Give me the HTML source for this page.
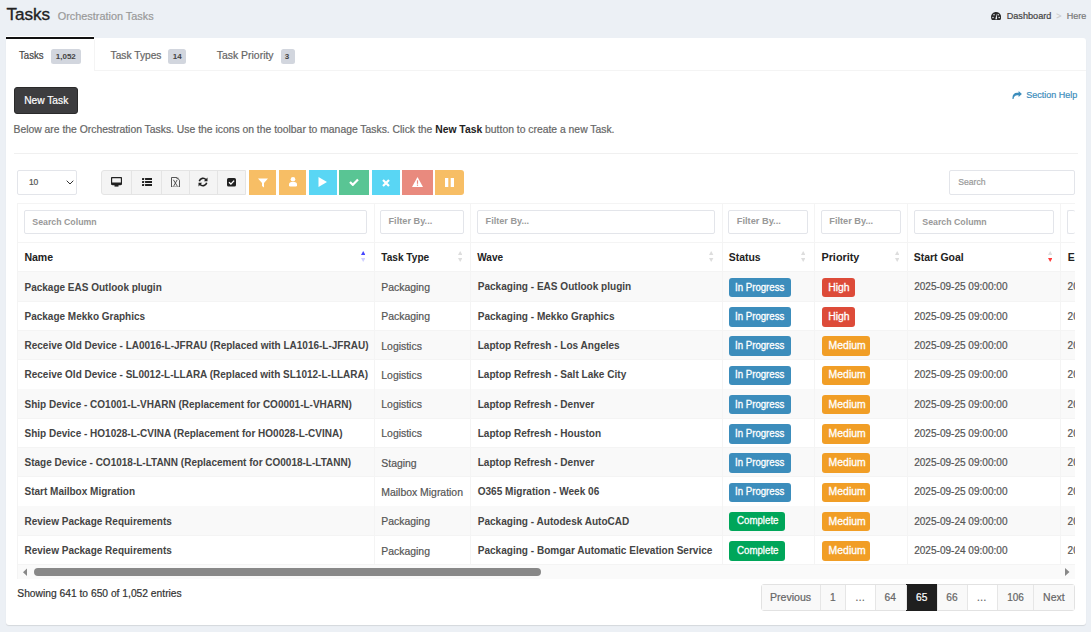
<!DOCTYPE html><html><head><meta charset="utf-8"><style>
*{box-sizing:border-box;margin:0;padding:0}
html,body{width:1091px;height:632px;overflow:hidden}
body{background:#ecf0f5;font-family:"Liberation Sans",sans-serif;position:relative}
.t{position:absolute;white-space:nowrap;-webkit-text-stroke:0.2px}
.t[style*="font-weight:700"],.t b{-webkit-text-stroke:0}
.r{position:absolute}
</style></head><body>
<div class="t" style="left:6.40px;top:4.12px;font-size:17.131px;line-height:21.41px;color:#222;font-weight:400;-webkit-text-stroke:0.35px">Tasks</div>
<div class="t" style="left:57.73px;top:10.14px;font-size:10.887px;line-height:13.61px;color:#999;font-weight:400;">Orchestration Tasks</div>
<svg class="r" style="left:990.70px;top:11.90px" width="10.2" height="8" viewBox="0 0 10.2 8"><path d="M0.9 8 C0.3 7.1 0 6.1 0 5.1 C0 2.3 2.3 0 5.1 0 C7.9 0 10.2 2.3 10.2 5.1 C10.2 6.1 9.9 7.1 9.3 8 Z" fill="#2a2a2a"/><circle cx="2.0" cy="5.4" r="0.75" fill="#ecf0f5"/><circle cx="3.0" cy="2.7" r="0.75" fill="#ecf0f5"/><circle cx="7.2" cy="2.7" r="0.75" fill="#ecf0f5"/><circle cx="8.2" cy="5.4" r="0.75" fill="#ecf0f5"/><path d="M4.3 7.2 L5.8 1.8 L6.1 7.2 Z" fill="#ecf0f5"/></svg>
<div class="t" style="left:1006.70px;top:10.62px;font-size:9.138px;line-height:11.42px;color:#444;font-weight:400;">Dashboard</div>
<div class="t" style="left:1056.30px;top:10.75px;font-size:8.8px;line-height:11.0px;color:#ccc;font-weight:400;">&gt;</div>
<div class="t" style="left:1066.70px;top:10.65px;font-size:9.053px;line-height:11.32px;color:#777;font-weight:400;">Here</div>
<div class="r" style="left:6.00px;top:37.60px;width:1080.00px;height:587.90px;background:#fff;border-radius:3px;box-shadow:0 1px 1px rgba(0,0,0,.1)"></div>
<div class="r" style="left:6.00px;top:35.90px;width:88.10px;height:2.10px;background:#fff"></div>
<div class="r" style="left:6.00px;top:70.00px;width:1080.00px;height:1.00px;background:#f4f4f4"></div>
<div class="r" style="left:6.00px;top:37.00px;width:88.10px;height:2.40px;background:#111"></div>
<div class="r" style="left:93.60px;top:39.65px;width:1.00px;height:30.35px;background:#f4f4f4"></div>
<div class="r" style="left:6.00px;top:70.00px;width:87.50px;height:1.00px;background:#fff"></div>
<div class="t" style="left:19.00px;top:50.38px;font-size:10px;line-height:12.5px;color:#444;font-weight:400;transform:scaleX(0.9615);transform-origin:0 0;">Tasks</div>
<div class="t" style="left:110.60px;top:50.08px;font-size:10.212px;line-height:12.77px;color:#666;font-weight:400;">Task Types</div>
<div class="t" style="left:216.76px;top:49.14px;font-size:10.456px;line-height:13.07px;color:#666;font-weight:400;">Task Priority</div>
<div class="r" style="left:51.30px;top:49.10px;width:29.50px;height:15.30px;background:#d2d6de;border-radius:2.5px"></div>
<div class="t" style="left:55.81px;top:52.11px;font-size:8.0px;line-height:10.0px;color:#444;font-weight:700;">1,052</div>
<div class="r" style="left:168.20px;top:49.10px;width:18.00px;height:15.30px;background:#d2d6de;border-radius:2.5px"></div>
<div class="t" style="left:172.81px;top:52.11px;font-size:8.0px;line-height:10.0px;color:#444;font-weight:700;">14</div>
<div class="r" style="left:280.60px;top:49.10px;width:14.10px;height:15.30px;background:#d2d6de;border-radius:2.5px"></div>
<div class="t" style="left:284.81px;top:52.11px;font-size:8.0px;line-height:10.0px;color:#444;font-weight:700;">3</div>
<div class="r" style="left:14.00px;top:87.00px;width:64.00px;height:26.50px;background:#3d3d3f;border:1px solid #2a2a2a;border-radius:3px"></div>
<div class="t" style="left:24.20px;top:94.87px;font-size:10.216px;line-height:12.77px;color:#fff;font-weight:400;">New Task</div>
<div class="t" style="left:13.50px;top:123.92px;font-size:10.378px;line-height:12.97px;color:#666;font-weight:400;">Below are the Orchestration Tasks. Use the icons on the toolbar to manage Tasks. Click the <b style="color:#222">New Task</b> button to create a new Task.</div>
<svg class="r" style="left:1011.50px;top:90.60px" width="10" height="8.2" viewBox="0 0 10 8.2"><path d="M6.6 0 L9.9 3.05 L6.6 6.1 V4.3 H5.2 C3.2 4.3 1.9 5.6 1.5 8.2 H0.5 C0.1 4.2 1.8 1.8 5.2 1.8 H6.6 Z" fill="#3c8dbc"/></svg>
<div class="t" style="left:1026.21px;top:90.14px;font-size:9.012px;line-height:11.27px;color:#3c8dbc;font-weight:400;">Section Help</div>
<div class="r" style="left:14.00px;top:153.20px;width:1064.30px;height:1.00px;background:#f0f0f0"></div>
<div class="r" style="left:17.00px;top:170.00px;width:60.00px;height:24.50px;background:#fff;border:1px solid #e3e5ea;border-radius:2px"></div>
<div class="t" style="left:28.90px;top:177.30px;font-size:8.5px;line-height:10.62px;color:#555;font-weight:400;">10</div>
<svg class="r" style="left:65.50px;top:180.00px" width="8" height="5" viewBox="0 0 8 5"><path d="M0.7 0.7 L4 4 L7.3 0.7" fill="none" stroke="#333" stroke-width="1.0"/></svg>
<div class="r" style="left:101.20px;top:170.00px;width:144.60px;height:24.60px;background:#f4f4f4;border:1px solid #e4e4e4;border-radius:3px 0 0 3px"></div>
<div class="r" style="left:131.20px;top:170.00px;width:1.00px;height:24.60px;background:#e4e4e4"></div>
<div class="r" style="left:160.90px;top:170.00px;width:1.00px;height:24.60px;background:#e4e4e4"></div>
<div class="r" style="left:188.80px;top:170.00px;width:1.00px;height:24.60px;background:#e4e4e4"></div>
<div class="r" style="left:216.60px;top:170.00px;width:1.00px;height:24.60px;background:#e4e4e4"></div>
<svg class="r" style="left:111.00px;top:177.00px" width="11" height="10" viewBox="0 0 11 10"><rect x="0.5" y="0.5" width="10" height="7" rx="1" fill="none" stroke="#222" stroke-width="1.3"/><rect x="0.5" y="5.5" width="10" height="2.2" fill="#222"/><rect x="3.5" y="8" width="4" height="1.6" fill="#222"/></svg>
<svg class="r" style="left:141.60px;top:177.80px" width="10.3" height="8" viewBox="0 0 10.3 8"><g fill="#222"><rect x="0" y="0" width="2.1" height="1.9" rx="0.5"/><rect x="3" y="0" width="7.3" height="1.9" rx="0.4"/><rect x="0" y="3.05" width="2.1" height="1.9" rx="0.5"/><rect x="3" y="3.05" width="7.3" height="1.9" rx="0.4"/><rect x="0" y="6.1" width="2.1" height="1.9" rx="0.5"/><rect x="3" y="6.1" width="7.3" height="1.9" rx="0.4"/></g></svg>
<svg class="r" style="left:171.00px;top:176.80px" width="9" height="10.6" viewBox="0 0 9 10.6"><path d="M0.5 0.5 H5.8 L8.5 3.2 V10.1 H0.5 Z" fill="none" stroke="#444" stroke-width="0.9"/><path d="M2.4 2.8 L6.4 9.3 M6.2 2.8 L2.6 9.3" stroke="#444" stroke-width="0.9"/><path d="M5.2 1.2 L7.6 1.2" stroke="#444" stroke-width="0.7"/></svg>
<svg class="r" style="left:198.00px;top:176.80px" width="10" height="10" viewBox="0 0 10 10"><path d="M1.3 4.2 A3.8 3.8 0 0 1 8 2.8" fill="none" stroke="#222" stroke-width="1.6"/><path d="M9.5 0.6 V4.3 H5.8 Z" fill="#222"/><path d="M8.7 5.8 A3.8 3.8 0 0 1 2 7.2" fill="none" stroke="#222" stroke-width="1.6"/><path d="M0.5 9.4 V5.7 H4.2 Z" fill="#222"/></svg>
<svg class="r" style="left:227.00px;top:178.00px" width="9" height="8.5" viewBox="0 0 9 8.5"><rect x="0" y="0" width="9" height="8.5" rx="1.6" fill="#222"/><path d="M2 4.3 L3.9 6.1 L7.1 2.6" fill="none" stroke="#fff" stroke-width="1.4"/></svg>
<div class="r" style="left:248.50px;top:170.00px;width:27.90px;height:24.60px;background:#f7be65;border-radius:0"></div>
<div class="r" style="left:279.00px;top:170.00px;width:27.30px;height:24.60px;background:#f7be65;border-radius:0"></div>
<div class="r" style="left:308.90px;top:170.00px;width:27.90px;height:24.60px;background:#59d6f4;border-radius:0"></div>
<div class="r" style="left:339.40px;top:170.00px;width:29.80px;height:24.60px;background:#59c594;border-radius:0"></div>
<div class="r" style="left:371.90px;top:170.00px;width:27.90px;height:24.60px;background:#59d6f4;border-radius:0"></div>
<div class="r" style="left:402.40px;top:170.00px;width:30.40px;height:24.60px;background:#e98a7e;border-radius:0"></div>
<div class="r" style="left:435.10px;top:170.00px;width:28.60px;height:24.60px;background:#f7be65;border-radius:0 3px 3px 0"></div>
<svg class="r" style="left:257.50px;top:177.50px" width="10" height="10" viewBox="0 0 10 10"><path d="M0 0.5 H10 L6 5 V9.5 L4 8 V5 Z" fill="#fff"/></svg>
<svg class="r" style="left:288.70px;top:177.45px" width="8" height="9.5" viewBox="0 0 8 9.5"><circle cx="4" cy="2.3" r="2.3" fill="#fff"/><path d="M0 8.3 V7.3 C0 5.6 1.4 5 4 5 C6.6 5 8 5.6 8 7.3 V8.3 Q8 9.5 6.8 9.5 H1.2 Q0 9.5 0 8.3 Z" fill="#fff"/></svg>
<svg class="r" style="left:318.40px;top:177.30px" width="9" height="10" viewBox="0 0 9 10"><path d="M0.5 0 L9 5 L0.5 10 Z" fill="#fff"/></svg>
<svg class="r" style="left:349.30px;top:178.30px" width="10" height="8" viewBox="0 0 10 8"><path d="M1 4 L3.8 6.8 L9 1.5" fill="none" stroke="#fff" stroke-width="2.2"/></svg>
<svg class="r" style="left:381.80px;top:178.60px" width="8" height="8" viewBox="0 0 8 8"><path d="M1 1 L7 7 M7 1 L1 7" stroke="#fff" stroke-width="2.2"/></svg>
<svg class="r" style="left:412.10px;top:177.30px" width="11" height="10" viewBox="0 0 11 10"><path d="M5.5 0 L11 10 H0 Z" fill="#fff"/><rect x="4.9" y="3.3" width="1.2" height="3.5" fill="#e98a7e"/><rect x="4.9" y="7.6" width="1.2" height="1.2" fill="#e98a7e"/></svg>
<svg class="r" style="left:444.90px;top:178.10px" width="9" height="9" viewBox="0 0 9 9"><rect x="0" y="0" width="3.3" height="9" fill="#fff"/><rect x="5.7" y="0" width="3.3" height="9" fill="#fff"/></svg>
<div class="r" style="left:949.40px;top:170.00px;width:125.20px;height:24.60px;background:#fff;border:1px solid #e3e5ea;border-radius:2px"></div>
<div class="t" style="left:958.30px;top:177.19px;font-size:8.614px;line-height:10.77px;color:#999;font-weight:400;">Search</div>
<div class="r" style="left:17.50px;top:203.00px;width:1057.50px;height:1.00px;background:#f4f4f4"></div>
<div class="r" style="left:17.50px;top:241.50px;width:1057.50px;height:1.00px;background:#f4f4f4"></div>
<div class="r" style="left:17.50px;top:271.20px;width:1057.50px;height:1.40px;background:#f4f4f4"></div>
<div class="r" style="left:17.50px;top:272.00px;width:1057.50px;height:29.27px;background:#f9f9f9"></div>
<div class="r" style="left:17.50px;top:300.77px;width:1057.50px;height:1.00px;background:#f4f4f4"></div>
<div class="r" style="left:17.50px;top:330.04px;width:1057.50px;height:1.00px;background:#f4f4f4"></div>
<div class="r" style="left:17.50px;top:330.54px;width:1057.50px;height:29.27px;background:#f9f9f9"></div>
<div class="r" style="left:17.50px;top:359.31px;width:1057.50px;height:1.00px;background:#f4f4f4"></div>
<div class="r" style="left:17.50px;top:388.58px;width:1057.50px;height:1.00px;background:#f4f4f4"></div>
<div class="r" style="left:17.50px;top:389.08px;width:1057.50px;height:29.27px;background:#f9f9f9"></div>
<div class="r" style="left:17.50px;top:417.85px;width:1057.50px;height:1.00px;background:#f4f4f4"></div>
<div class="r" style="left:17.50px;top:447.12px;width:1057.50px;height:1.00px;background:#f4f4f4"></div>
<div class="r" style="left:17.50px;top:447.62px;width:1057.50px;height:29.27px;background:#f9f9f9"></div>
<div class="r" style="left:17.50px;top:476.39px;width:1057.50px;height:1.00px;background:#f4f4f4"></div>
<div class="r" style="left:17.50px;top:505.66px;width:1057.50px;height:1.00px;background:#f4f4f4"></div>
<div class="r" style="left:17.50px;top:506.16px;width:1057.50px;height:29.27px;background:#f9f9f9"></div>
<div class="r" style="left:17.50px;top:534.93px;width:1057.50px;height:1.00px;background:#f4f4f4"></div>
<div class="r" style="left:17.50px;top:564.20px;width:1057.50px;height:1.00px;background:#f4f4f4"></div>
<div class="r" style="left:17.00px;top:203.00px;width:1.00px;height:376.00px;background:#f4f4f4"></div>
<div class="r" style="left:373.50px;top:203.00px;width:1.00px;height:361.70px;background:#f4f4f4"></div>
<div class="r" style="left:470.00px;top:203.00px;width:1.00px;height:361.70px;background:#f4f4f4"></div>
<div class="r" style="left:721.50px;top:203.00px;width:1.00px;height:361.70px;background:#f4f4f4"></div>
<div class="r" style="left:814.00px;top:203.00px;width:1.00px;height:361.70px;background:#f4f4f4"></div>
<div class="r" style="left:907.20px;top:203.00px;width:1.00px;height:361.70px;background:#f4f4f4"></div>
<div class="r" style="left:1060.40px;top:203.00px;width:1.00px;height:361.70px;background:#f4f4f4"></div>
<div class="r" style="left:24.20px;top:210.20px;width:343.30px;height:23.60px;background:#fff;border:1px solid #e3e5ea;border-radius:2px;"></div>
<div class="t" style="left:32.30px;top:216.86px;font-size:8.79px;line-height:10.99px;color:#999;font-weight:700;">Search Column</div>
<div class="r" style="left:380.30px;top:210.20px;width:83.60px;height:23.60px;background:#fff;border:1px solid #e3e5ea;border-radius:2px;"></div>
<div class="t" style="left:388.50px;top:216.03px;font-size:9.201px;line-height:11.5px;color:#999;font-weight:700;">Filter By...</div>
<div class="r" style="left:477.10px;top:210.20px;width:238.40px;height:23.60px;background:#fff;border:1px solid #e3e5ea;border-radius:2px;"></div>
<div class="t" style="left:485.60px;top:215.83px;font-size:9.131px;line-height:11.41px;color:#999;font-weight:700;">Filter By...</div>
<div class="r" style="left:728.40px;top:210.20px;width:79.50px;height:23.60px;background:#fff;border:1px solid #e3e5ea;border-radius:2px;"></div>
<div class="t" style="left:736.80px;top:216.48px;font-size:9.258px;line-height:11.57px;color:#999;font-weight:700;">Filter By...</div>
<div class="r" style="left:821.00px;top:210.20px;width:79.80px;height:23.60px;background:#fff;border:1px solid #e3e5ea;border-radius:2px;"></div>
<div class="t" style="left:829.27px;top:216.01px;font-size:9.221px;line-height:11.53px;color:#999;font-weight:700;">Filter By...</div>
<div class="r" style="left:914.20px;top:210.20px;width:139.60px;height:23.60px;background:#fff;border:1px solid #e3e5ea;border-radius:2px;"></div>
<div class="t" style="left:922.30px;top:216.86px;font-size:8.79px;line-height:10.99px;color:#999;font-weight:700;">Search Column</div>
<div class="r" style="left:1067.00px;top:210.20px;width:8.00px;height:23.60px;background:#fff;border:1px solid #e3e5ea;border-radius:2px;border-right:none"></div>
<div class="t" style="left:24.40px;top:250.94px;font-size:10.557px;line-height:13.2px;color:#222;font-weight:700;">Name</div>
<div class="t" style="left:381.24px;top:251.68px;font-size:10.112px;line-height:12.64px;color:#222;font-weight:700;">Task Type</div>
<div class="t" style="left:477.24px;top:251.74px;font-size:10.044px;line-height:12.55px;color:#222;font-weight:700;">Wave</div>
<div class="t" style="left:728.76px;top:251.35px;font-size:10.452px;line-height:13.06px;color:#222;font-weight:700;">Status</div>
<div class="t" style="left:821.40px;top:250.95px;font-size:10.863px;line-height:13.58px;color:#222;font-weight:700;">Priority</div>
<div class="t" style="left:913.70px;top:251.31px;font-size:10.485px;line-height:13.11px;color:#222;font-weight:700;">Start Goal</div>
<svg class="r" style="left:360.90px;top:250.80px" width="4.4" height="11" viewBox="0 0 4.4 11"><path d="M2.2 0 L4.4 4 H0 Z" fill="#4646ff"/><path d="M0 7 H4.4 L2.2 11 Z" fill="#d0d0ff"/></svg>
<svg class="r" style="left:458.00px;top:250.80px" width="4.4" height="11" viewBox="0 0 4.4 11"><path d="M2.2 0 L4.4 4 H0 Z" fill="#ddd"/><path d="M0 7 H4.4 L2.2 11 Z" fill="#ddd"/></svg>
<svg class="r" style="left:709.30px;top:250.80px" width="4.4" height="11" viewBox="0 0 4.4 11"><path d="M2.2 0 L4.4 4 H0 Z" fill="#ddd"/><path d="M0 7 H4.4 L2.2 11 Z" fill="#ddd"/></svg>
<svg class="r" style="left:801.10px;top:250.80px" width="4.4" height="11" viewBox="0 0 4.4 11"><path d="M2.2 0 L4.4 4 H0 Z" fill="#ddd"/><path d="M0 7 H4.4 L2.2 11 Z" fill="#ddd"/></svg>
<svg class="r" style="left:894.60px;top:250.80px" width="4.4" height="11" viewBox="0 0 4.4 11"><path d="M2.2 0 L4.4 4 H0 Z" fill="#ddd"/><path d="M0 7 H4.4 L2.2 11 Z" fill="#ddd"/></svg>
<svg class="r" style="left:1047.50px;top:250.80px" width="4.4" height="11" viewBox="0 0 4.4 11"><path d="M2.2 0 L4.4 4 H0 Z" fill="#ddd"/><path d="M0 7 H4.4 L2.2 11 Z" fill="#ff3b3b"/></svg>
<div class="t" style="left:24.50px;top:281.55px;font-size:10.0px;line-height:12.5px;color:#444;font-weight:700;">Package EAS Outlook plugin</div>
<div class="t" style="left:381.30px;top:281.13px;font-size:10.432px;line-height:13.04px;color:#555;font-weight:400;">Packaging</div>
<div class="t" style="left:477.73px;top:281.48px;font-size:10.068px;line-height:12.58px;color:#444;font-weight:700;">Packaging - EAS Outlook plugin</div>
<div class="r" style="left:729.00px;top:277.70px;width:62.00px;height:19.60px;background:#3c8dbc;border-radius:3px"></div>
<div class="t" style="left:735.21px;top:281.55px;font-size:10px;line-height:12.5px;color:#fff;font-weight:400;transform:scaleX(0.9651);transform-origin:0 0;-webkit-text-stroke:0.3px">In Progress</div>
<div class="r" style="left:821.90px;top:277.70px;width:33.20px;height:19.60px;background:#dd4b39;border-radius:3px"></div>
<div class="t" style="left:828.20px;top:281.12px;font-size:10.446px;line-height:13.06px;color:#fff;font-weight:400;-webkit-text-stroke:0.3px">High</div>
<div class="t" style="left:914.20px;top:281.48px;font-size:10.067px;line-height:12.58px;color:#555;font-weight:400;">2025-09-25 09:00:00</div>
<div class="t" style="left:24.50px;top:310.81px;font-size:10.0px;line-height:12.5px;color:#444;font-weight:700;">Package Mekko Graphics</div>
<div class="t" style="left:381.30px;top:310.40px;font-size:10.432px;line-height:13.04px;color:#555;font-weight:400;">Packaging</div>
<div class="t" style="left:477.73px;top:310.75px;font-size:10.068px;line-height:12.58px;color:#444;font-weight:700;">Packaging - Mekko Graphics</div>
<div class="r" style="left:729.00px;top:306.97px;width:62.00px;height:19.60px;background:#3c8dbc;border-radius:3px"></div>
<div class="t" style="left:735.21px;top:310.81px;font-size:10px;line-height:12.5px;color:#fff;font-weight:400;transform:scaleX(0.9651);transform-origin:0 0;-webkit-text-stroke:0.3px">In Progress</div>
<div class="r" style="left:821.90px;top:306.97px;width:33.20px;height:19.60px;background:#dd4b39;border-radius:3px"></div>
<div class="t" style="left:828.20px;top:310.39px;font-size:10.446px;line-height:13.06px;color:#fff;font-weight:400;-webkit-text-stroke:0.3px">High</div>
<div class="t" style="left:914.20px;top:310.75px;font-size:10.067px;line-height:12.58px;color:#555;font-weight:400;">2025-09-25 09:00:00</div>
<div class="t" style="left:24.50px;top:340.09px;font-size:10.0px;line-height:12.5px;color:#444;font-weight:700;">Receive Old Device - LA0016-L-JFRAU (Replaced with LA1016-L-JFRAU)</div>
<div class="t" style="left:381.30px;top:339.67px;font-size:10.432px;line-height:13.04px;color:#555;font-weight:400;">Logistics</div>
<div class="t" style="left:477.73px;top:340.02px;font-size:10.068px;line-height:12.58px;color:#444;font-weight:700;">Laptop Refresh - Los Angeles</div>
<div class="r" style="left:729.00px;top:336.24px;width:62.00px;height:19.60px;background:#3c8dbc;border-radius:3px"></div>
<div class="t" style="left:735.21px;top:340.09px;font-size:10px;line-height:12.5px;color:#fff;font-weight:400;transform:scaleX(0.9651);transform-origin:0 0;-webkit-text-stroke:0.3px">In Progress</div>
<div class="r" style="left:821.90px;top:336.24px;width:48.40px;height:19.60px;background:#f19e26;border-radius:3px"></div>
<div class="t" style="left:828.60px;top:338.99px;font-size:10.445px;line-height:13.06px;color:#fff;font-weight:400;-webkit-text-stroke:0.3px">Medium</div>
<div class="t" style="left:914.20px;top:340.02px;font-size:10.067px;line-height:12.58px;color:#555;font-weight:400;">2025-09-25 09:00:00</div>
<div class="t" style="left:24.50px;top:369.36px;font-size:10.0px;line-height:12.5px;color:#444;font-weight:700;">Receive Old Device - SL0012-L-LLARA (Replaced with SL1012-L-LLARA)</div>
<div class="t" style="left:381.30px;top:368.94px;font-size:10.432px;line-height:13.04px;color:#555;font-weight:400;">Logistics</div>
<div class="t" style="left:477.73px;top:369.29px;font-size:10.068px;line-height:12.58px;color:#444;font-weight:700;">Laptop Refresh - Salt Lake City</div>
<div class="r" style="left:729.00px;top:365.51px;width:62.00px;height:19.60px;background:#3c8dbc;border-radius:3px"></div>
<div class="t" style="left:735.21px;top:369.36px;font-size:10px;line-height:12.5px;color:#fff;font-weight:400;transform:scaleX(0.9651);transform-origin:0 0;-webkit-text-stroke:0.3px">In Progress</div>
<div class="r" style="left:821.90px;top:365.51px;width:48.40px;height:19.60px;background:#f19e26;border-radius:3px"></div>
<div class="t" style="left:828.60px;top:368.26px;font-size:10.445px;line-height:13.06px;color:#fff;font-weight:400;-webkit-text-stroke:0.3px">Medium</div>
<div class="t" style="left:914.20px;top:369.29px;font-size:10.067px;line-height:12.58px;color:#555;font-weight:400;">2025-09-25 09:00:00</div>
<div class="t" style="left:24.50px;top:398.62px;font-size:10.0px;line-height:12.5px;color:#444;font-weight:700;">Ship Device - CO1001-L-VHARN (Replacement for CO0001-L-VHARN)</div>
<div class="t" style="left:381.30px;top:398.21px;font-size:10.432px;line-height:13.04px;color:#555;font-weight:400;">Logistics</div>
<div class="t" style="left:477.73px;top:398.56px;font-size:10.068px;line-height:12.58px;color:#444;font-weight:700;">Laptop Refresh - Denver</div>
<div class="r" style="left:729.00px;top:394.78px;width:62.00px;height:19.60px;background:#3c8dbc;border-radius:3px"></div>
<div class="t" style="left:735.21px;top:398.62px;font-size:10px;line-height:12.5px;color:#fff;font-weight:400;transform:scaleX(0.9651);transform-origin:0 0;-webkit-text-stroke:0.3px">In Progress</div>
<div class="r" style="left:821.90px;top:394.78px;width:48.40px;height:19.60px;background:#f19e26;border-radius:3px"></div>
<div class="t" style="left:828.60px;top:397.53px;font-size:10.445px;line-height:13.06px;color:#fff;font-weight:400;-webkit-text-stroke:0.3px">Medium</div>
<div class="t" style="left:914.20px;top:398.56px;font-size:10.067px;line-height:12.58px;color:#555;font-weight:400;">2025-09-25 09:00:00</div>
<div class="t" style="left:24.50px;top:427.89px;font-size:10.0px;line-height:12.5px;color:#444;font-weight:700;">Ship Device - HO1028-L-CVINA (Replacement for HO0028-L-CVINA)</div>
<div class="t" style="left:381.30px;top:427.48px;font-size:10.432px;line-height:13.04px;color:#555;font-weight:400;">Logistics</div>
<div class="t" style="left:477.73px;top:427.83px;font-size:10.068px;line-height:12.58px;color:#444;font-weight:700;">Laptop Refresh - Houston</div>
<div class="r" style="left:729.00px;top:424.05px;width:62.00px;height:19.60px;background:#3c8dbc;border-radius:3px"></div>
<div class="t" style="left:735.21px;top:427.89px;font-size:10px;line-height:12.5px;color:#fff;font-weight:400;transform:scaleX(0.9651);transform-origin:0 0;-webkit-text-stroke:0.3px">In Progress</div>
<div class="r" style="left:821.90px;top:424.05px;width:48.40px;height:19.60px;background:#f19e26;border-radius:3px"></div>
<div class="t" style="left:828.60px;top:426.80px;font-size:10.445px;line-height:13.06px;color:#fff;font-weight:400;-webkit-text-stroke:0.3px">Medium</div>
<div class="t" style="left:914.20px;top:427.83px;font-size:10.067px;line-height:12.58px;color:#555;font-weight:400;">2025-09-25 09:00:00</div>
<div class="t" style="left:24.50px;top:457.17px;font-size:10.0px;line-height:12.5px;color:#444;font-weight:700;">Stage Device - CO1018-L-LTANN (Replacement for CO0018-L-LTANN)</div>
<div class="t" style="left:381.30px;top:456.75px;font-size:10.432px;line-height:13.04px;color:#555;font-weight:400;">Staging</div>
<div class="t" style="left:477.73px;top:457.10px;font-size:10.068px;line-height:12.58px;color:#444;font-weight:700;">Laptop Refresh - Denver</div>
<div class="r" style="left:729.00px;top:453.32px;width:62.00px;height:19.60px;background:#3c8dbc;border-radius:3px"></div>
<div class="t" style="left:735.21px;top:457.17px;font-size:10px;line-height:12.5px;color:#fff;font-weight:400;transform:scaleX(0.9651);transform-origin:0 0;-webkit-text-stroke:0.3px">In Progress</div>
<div class="r" style="left:821.90px;top:453.32px;width:48.40px;height:19.60px;background:#f19e26;border-radius:3px"></div>
<div class="t" style="left:828.60px;top:456.07px;font-size:10.445px;line-height:13.06px;color:#fff;font-weight:400;-webkit-text-stroke:0.3px">Medium</div>
<div class="t" style="left:914.20px;top:457.10px;font-size:10.067px;line-height:12.58px;color:#555;font-weight:400;">2025-09-25 09:00:00</div>
<div class="t" style="left:24.50px;top:486.44px;font-size:10.0px;line-height:12.5px;color:#444;font-weight:700;">Start Mailbox Migration</div>
<div class="t" style="left:381.30px;top:486.02px;font-size:10.432px;line-height:13.04px;color:#555;font-weight:400;">Mailbox Migration</div>
<div class="t" style="left:477.73px;top:486.37px;font-size:10.068px;line-height:12.58px;color:#444;font-weight:700;">O365 Migration - Week 06</div>
<div class="r" style="left:729.00px;top:482.59px;width:62.00px;height:19.60px;background:#3c8dbc;border-radius:3px"></div>
<div class="t" style="left:735.21px;top:486.44px;font-size:10px;line-height:12.5px;color:#fff;font-weight:400;transform:scaleX(0.9651);transform-origin:0 0;-webkit-text-stroke:0.3px">In Progress</div>
<div class="r" style="left:821.90px;top:482.59px;width:48.40px;height:19.60px;background:#f19e26;border-radius:3px"></div>
<div class="t" style="left:828.60px;top:485.34px;font-size:10.445px;line-height:13.06px;color:#fff;font-weight:400;-webkit-text-stroke:0.3px">Medium</div>
<div class="t" style="left:914.20px;top:486.37px;font-size:10.067px;line-height:12.58px;color:#555;font-weight:400;">2025-09-25 09:00:00</div>
<div class="t" style="left:24.50px;top:515.71px;font-size:10.0px;line-height:12.5px;color:#444;font-weight:700;">Review Package Requirements</div>
<div class="t" style="left:381.30px;top:515.29px;font-size:10.432px;line-height:13.04px;color:#555;font-weight:400;">Packaging</div>
<div class="t" style="left:477.73px;top:515.64px;font-size:10.068px;line-height:12.58px;color:#444;font-weight:700;">Packaging - Autodesk AutoCAD</div>
<div class="r" style="left:729.00px;top:511.86px;width:56.00px;height:19.60px;background:#00a65a;border-radius:3px"></div>
<div class="t" style="left:736.60px;top:515.45px;font-size:10px;line-height:12.5px;color:#fff;font-weight:400;transform:scaleX(0.9700);transform-origin:0 0;-webkit-text-stroke:0.3px">Complete</div>
<div class="r" style="left:821.90px;top:511.86px;width:48.40px;height:19.60px;background:#f19e26;border-radius:3px"></div>
<div class="t" style="left:828.60px;top:514.61px;font-size:10.445px;line-height:13.06px;color:#fff;font-weight:400;-webkit-text-stroke:0.3px">Medium</div>
<div class="t" style="left:914.20px;top:515.64px;font-size:10.067px;line-height:12.58px;color:#555;font-weight:400;">2025-09-24 09:00:00</div>
<div class="t" style="left:24.50px;top:544.98px;font-size:10.0px;line-height:12.5px;color:#444;font-weight:700;">Review Package Requirements</div>
<div class="t" style="left:381.30px;top:544.56px;font-size:10.432px;line-height:13.04px;color:#555;font-weight:400;">Packaging</div>
<div class="t" style="left:477.73px;top:544.91px;font-size:10.068px;line-height:12.58px;color:#444;font-weight:700;">Packaging - Bomgar Automatic Elevation Service</div>
<div class="r" style="left:729.00px;top:541.13px;width:56.00px;height:19.60px;background:#00a65a;border-radius:3px"></div>
<div class="t" style="left:736.60px;top:544.72px;font-size:10px;line-height:12.5px;color:#fff;font-weight:400;transform:scaleX(0.9700);transform-origin:0 0;-webkit-text-stroke:0.3px">Complete</div>
<div class="r" style="left:821.90px;top:541.13px;width:48.40px;height:19.60px;background:#f19e26;border-radius:3px"></div>
<div class="t" style="left:828.60px;top:543.88px;font-size:10.445px;line-height:13.06px;color:#fff;font-weight:400;-webkit-text-stroke:0.3px">Medium</div>
<div class="t" style="left:914.20px;top:544.91px;font-size:10.067px;line-height:12.58px;color:#555;font-weight:400;">2025-09-24 09:00:00</div>
<div class="r" style="left:1062px;top:241px;width:13px;height:324px;overflow:hidden">
<div class="t" style="left:5.70px;top:10.31px;font-size:10.485px;line-height:13.11px;color:#222;font-weight:700">End Goal</div>
<div class="t" style="left:5.60px;top:40.48px;font-size:10.067px;line-height:12.58px;color:#555">2025-09-25 09:00:00</div>
<div class="t" style="left:5.60px;top:69.75px;font-size:10.067px;line-height:12.58px;color:#555">2025-09-25 09:00:00</div>
<div class="t" style="left:5.60px;top:99.02px;font-size:10.067px;line-height:12.58px;color:#555">2025-09-25 09:00:00</div>
<div class="t" style="left:5.60px;top:128.29px;font-size:10.067px;line-height:12.58px;color:#555">2025-09-25 09:00:00</div>
<div class="t" style="left:5.60px;top:157.56px;font-size:10.067px;line-height:12.58px;color:#555">2025-09-25 09:00:00</div>
<div class="t" style="left:5.60px;top:186.83px;font-size:10.067px;line-height:12.58px;color:#555">2025-09-25 09:00:00</div>
<div class="t" style="left:5.60px;top:216.10px;font-size:10.067px;line-height:12.58px;color:#555">2025-09-25 09:00:00</div>
<div class="t" style="left:5.60px;top:245.37px;font-size:10.067px;line-height:12.58px;color:#555">2025-09-25 09:00:00</div>
<div class="t" style="left:5.60px;top:274.64px;font-size:10.067px;line-height:12.58px;color:#555">2025-09-24 09:00:00</div>
<div class="t" style="left:5.60px;top:303.91px;font-size:10.067px;line-height:12.58px;color:#555">2025-09-24 09:00:00</div>
</div>
<div class="r" style="left:17.50px;top:565.00px;width:1057.50px;height:13.50px;background:#fafafa"></div>
<div class="r" style="left:34.00px;top:567.80px;width:507.00px;height:8.40px;background:#888;border-radius:4px"></div>
<svg class="r" style="left:22.80px;top:567.80px" width="4.5" height="8.4" viewBox="0 0 4.5 8.4"><path d="M4.5 0 V8.4 L0 4.2 Z" fill="#888"/></svg>
<svg class="r" style="left:1065.40px;top:568.00px" width="4.5" height="8" viewBox="0 0 4.5 8"><path d="M0 0 V8 L4.5 4 Z" fill="#888"/></svg>
<div class="t" style="left:17.30px;top:587.51px;font-size:10.286px;line-height:12.86px;color:#333;font-weight:400;">Showing 641 to 650 of 1,052 entries</div>
<div class="r" style="left:761.00px;top:584.10px;width:313.60px;height:26.60px;border:1px solid #e2e2e2;border-radius:3px;background:#f9f9f9"></div>
<div class="r" style="left:762.00px;top:585.10px;width:58.40px;height:24.60px;background:#f9f9f9"></div>
<div class="t" style="left:770.00px;top:591.43px;font-size:10.585px;line-height:13.23px;color:#666;font-weight:400;">Previous</div>
<div class="r" style="left:820.40px;top:585.10px;width:24.60px;height:24.60px;background:#f9f9f9"></div>
<div class="r" style="left:819.90px;top:585.00px;width:1.00px;height:24.80px;background:#e6e6e6"></div>
<div class="t" style="left:829.90px;top:592.43px;font-size:10.2px;line-height:12.75px;color:#666;font-weight:400;">1</div>
<div class="r" style="left:845.00px;top:585.10px;width:30.10px;height:24.60px;background:#fff"></div>
<div class="r" style="left:844.50px;top:585.00px;width:1.00px;height:24.80px;background:#e6e6e6"></div>
<div class="t" style="left:855.00px;top:592.43px;font-size:10.2px;line-height:12.75px;color:#666;font-weight:400;">…</div>
<div class="r" style="left:875.10px;top:585.10px;width:31.00px;height:24.60px;background:#f9f9f9"></div>
<div class="r" style="left:874.60px;top:585.00px;width:1.00px;height:24.80px;background:#e6e6e6"></div>
<div class="t" style="left:884.60px;top:592.43px;font-size:10.2px;line-height:12.75px;color:#666;font-weight:400;">64</div>
<div class="r" style="left:906.10px;top:584.10px;width:31.40px;height:26.60px;background:#1f1f1f"></div>
<div class="r" style="left:905.60px;top:585.00px;width:1.00px;height:24.80px;background:#e6e6e6"></div>
<div class="t" style="left:916.00px;top:592.43px;font-size:10.2px;line-height:12.75px;color:#fff;font-weight:400;">65</div>
<div class="r" style="left:937.50px;top:585.10px;width:29.80px;height:24.60px;background:#f9f9f9"></div>
<div class="r" style="left:937.00px;top:585.00px;width:1.00px;height:24.80px;background:#e6e6e6"></div>
<div class="t" style="left:946.30px;top:592.43px;font-size:10.2px;line-height:12.75px;color:#666;font-weight:400;">66</div>
<div class="r" style="left:967.30px;top:585.10px;width:30.40px;height:24.60px;background:#fff"></div>
<div class="r" style="left:966.80px;top:585.00px;width:1.00px;height:24.80px;background:#e6e6e6"></div>
<div class="t" style="left:976.50px;top:592.43px;font-size:10.2px;line-height:12.75px;color:#666;font-weight:400;">…</div>
<div class="r" style="left:997.70px;top:585.10px;width:35.60px;height:24.60px;background:#f9f9f9"></div>
<div class="r" style="left:997.20px;top:585.00px;width:1.00px;height:24.80px;background:#e6e6e6"></div>
<div class="t" style="left:1007.24px;top:592.39px;font-size:10.003px;line-height:12.5px;color:#666;font-weight:400;">106</div>
<div class="r" style="left:1033.30px;top:585.10px;width:40.30px;height:24.60px;background:#f9f9f9"></div>
<div class="r" style="left:1032.80px;top:585.00px;width:1.00px;height:24.80px;background:#e6e6e6"></div>
<div class="t" style="left:1043.10px;top:591.20px;font-size:10.442px;line-height:13.05px;color:#666;font-weight:400;">Next</div>
</body></html>
